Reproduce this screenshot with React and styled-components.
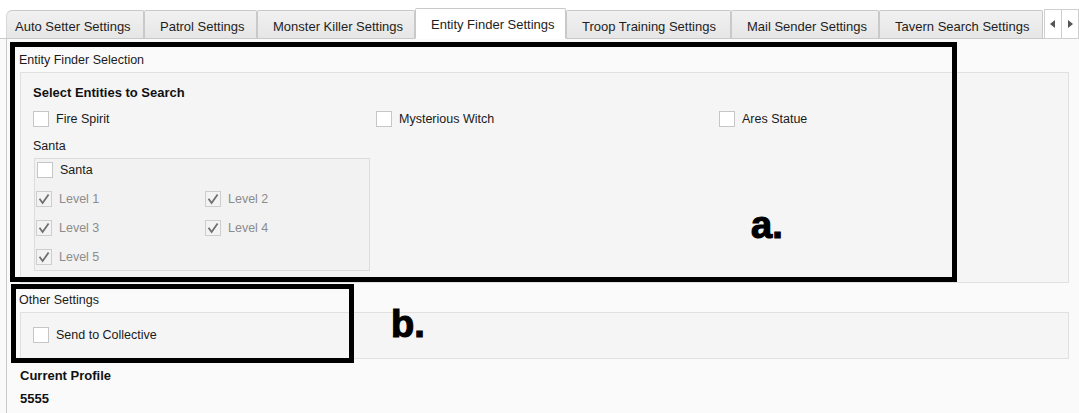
import React from 'react';
import styled, { createGlobalStyle } from 'styled-components';

const GlobalStyle = createGlobalStyle`
    html, body {
        margin: 0;
        padding: 0;
        background: #ffffff;
    }
    body {
        font-family: "Liberation Sans", Arial, sans-serif;
        font-size: 13px;
        color: #1a1a1a;
    }
`

const tabs = [
    { label: 'Auto Setter Settings', width: 138, clipped: true },
    { label: 'Patrol Settings', width: 113 },
    { label: 'Monster Killer Settings', width: 158 },
    { label: 'Entity Finder Settings', width: 151, active: true },
    { label: 'Troop Training Settings', width: 165 },
    { label: 'Mail Sender Settings', width: 148 },
    { label: 'Tavern Search Settings', width: 164 },
]

const entities = ['Fire Spirit', 'Mysterious Witch', 'Ares Statue']
const levels = ['Level 1', 'Level 2', 'Level 3', 'Level 4', 'Level 5']

const CheckBox = ({ checked, disabled, label }) => (
    <CheckRow disabled={disabled}>
        <Box disabled={disabled}>
            {checked && (
                <svg width="14" height="14" viewBox="0 0 14 14">
                    <path d="M2.5 6.8 L5.6 11 L11.6 2.6" fill="none" stroke="#6f6f6f" strokeWidth="1.8" />
                </svg>
            )}
        </Box>
        <span>{label}</span>
    </CheckRow>
)

export default function App() {
    return (
        <Page>
            <GlobalStyle />
            <TabBar>
                {tabs.map((t) => (
                    <Tab key={t.label} active={t.active} clipped={t.clipped} width={t.width}>
                        {t.label}
                    </Tab>
                ))}
                <ArrowGroup>
                    <ArrowButton>
                        <svg width="6" height="8" viewBox="0 0 6 8"><path d="M5 0 L0 4 L5 8 Z" fill="#555" /></svg>
                    </ArrowButton>
                    <ArrowButton>
                        <svg width="6" height="8" viewBox="0 0 6 8"><path d="M1 0 L6 4 L1 8 Z" fill="#555" /></svg>
                    </ArrowButton>
                </ArrowGroup>
            </TabBar>

            <Body>
                <PaneTitle>Entity Finder Selection</PaneTitle>
                <Pane height={211} padTop={12}>
                    <Heading>Select Entities to Search</Heading>
                    <EntityGrid>
                        {entities.map((e) => (
                            <CheckBox key={e} label={e} />
                        ))}
                    </EntityGrid>
                    <GroupLabel>Santa</GroupLabel>
                    <GroupBox>
                        <CheckBox label="Santa" />
                        <LevelGrid>
                            {levels.map((l) => (
                                <CheckBox key={l} label={l} checked disabled />
                            ))}
                        </LevelGrid>
                    </GroupBox>
                </Pane>

                <PaneTitle top={9}>Other Settings</PaneTitle>
                <Pane height={47} padTop={14}>
                    <CheckBox label="Send to Collective" />
                </Pane>

                <Heading top={9}>Current Profile</Heading>
                <Heading top={7}>5555</Heading>
            </Body>

            <Annotation style={{ left: 10, top: 42, width: 947, height: 240 }} />
            <Annotation style={{ left: 11, top: 284, width: 343, height: 79 }} />
            <Marker style={{ left: 751, top: 203 }}>a.</Marker>
            <Marker style={{ left: 391, top: 302 }}>b.</Marker>
        </Page>
    )
}

const Page = styled.div`
    position: relative;
    width: 1079px;
    height: 413px;
    overflow: hidden;
    background: #fafafa;
`

const TabBar = styled.div`
    display: flex;
    align-items: flex-end;
    height: 39px;
    padding-left: 6px;
    background: #ffffff;
    border-bottom: 1px solid #c9c9c9;
    box-sizing: border-box;
`

const Tab = styled.div`
    box-sizing: border-box;
    width: ${({ width }) => width}px;
    height: ${({ active }) => (active ? '31px' : '28px')};
    margin-bottom: ${({ active }) => (active ? '-1px' : '0')};
    padding-left: ${({ clipped }) => (clipped ? '8px' : '15px')};
    padding-top: ${({ active }) => (active ? '1px' : '3px')};
    display: flex;
    align-items: center;
    background: ${({ active }) => (active ? '#ffffff' : 'linear-gradient(#f1f1f1, #e6e6e6)')};
    border: 1px solid #c9c9c9;
    border-bottom: ${({ active }) => (active ? '1px solid #ffffff' : 'none')};
    border-left: ${({ clipped }) => (clipped ? '1px solid #d8d8d8' : '1px solid #c9c9c9')};
    border-radius: ${({ clipped }) => (clipped ? '6px 2px 0 0' : '2px 2px 0 0')};
    color: #1e1e1e;
    white-space: nowrap;
`

const ArrowGroup = styled.div`
    display: flex;
    margin-left: 1px;
    align-self: flex-start;
    margin-top: 9px;
`

const ArrowButton = styled.div`
    box-sizing: border-box;
    width: 18px;
    height: 30px;
    display: flex;
    align-items: center;
    justify-content: center;
    background: #ffffff;
    border: 1px solid #cfcfcf;
    margin-right: -1px;
`

const Body = styled.div`
    margin-left: 6px;
    border-left: 1px solid #c9c9c9;
    padding: 13px 10px 0 13px;
    height: 374px;
    box-sizing: border-box;
`

const PaneTitle = styled.div`
    margin-top: ${({ top }) => (top ? `${top}px` : '0')};
    margin-left: -1px;
    height: 16px;
    line-height: 16px;
    font-size: 12.5px;
    color: #1a1a1a;
`

const Pane = styled.div`
    box-sizing: border-box;
    margin-top: 4px;
    height: ${({ height }) => height}px;
    padding: ${({ padTop }) => padTop}px 12px 0 12px;
    background: #f5f5f5;
    border: 1px solid #e0e0e0;
`

const Heading = styled.div`
    margin-top: ${({ top }) => (top ? `${top}px` : '0')};
    height: 16px;
    line-height: 16px;
    font-weight: bold;
    font-size: 13px;
    color: #111;
`

const EntityGrid = styled.div`
    display: grid;
    grid-template-columns: 343px 343px 343px;
    margin-top: 10px;
`

const GroupLabel = styled.div`
    margin-top: 11px;
    height: 16px;
    line-height: 16px;
    font-size: 12.5px;
`

const GroupBox = styled.div`
    box-sizing: border-box;
    width: 336px;
    height: 113px;
    margin-top: 4px;
    margin-left: 1px;
    padding: 3px 0 0 2px;
    background: #f2f2f2;
    border: 1px solid #dcdcdc;
`

const LevelGrid = styled.div`
    display: grid;
    grid-template-columns: 169px 169px;
    row-gap: 13px;
    margin-top: 13px;
    margin-left: -1px;
`

const CheckRow = styled.label`
    display: flex;
    align-items: center;
    gap: 7px;
    height: 16px;
    font-size: 12.5px;
    color: ${({ disabled }) => (disabled ? '#8c8c8c' : '#1a1a1a')};
`

const Box = styled.span`
    box-sizing: border-box;
    width: 16px;
    height: 16px;
    flex: none;
    display: flex;
    align-items: center;
    justify-content: center;
    background: ${({ disabled }) => (disabled ? '#f3f3f3' : '#ffffff')};
    border: 1px solid ${({ disabled }) => (disabled ? '#cdcdcd' : '#c6c6c6')};
`

const Annotation = styled.div`
    position: absolute;
    box-sizing: border-box;
    border: 5px solid #000000;
    pointer-events: none;
`

const Marker = styled.div`
    position: absolute;
    font-family: "Liberation Sans", Arial, sans-serif;
    font-weight: bold;
    font-size: 38px;
    line-height: 44px;
    color: #000;
    -webkit-text-stroke: 1.2px #000;
`
